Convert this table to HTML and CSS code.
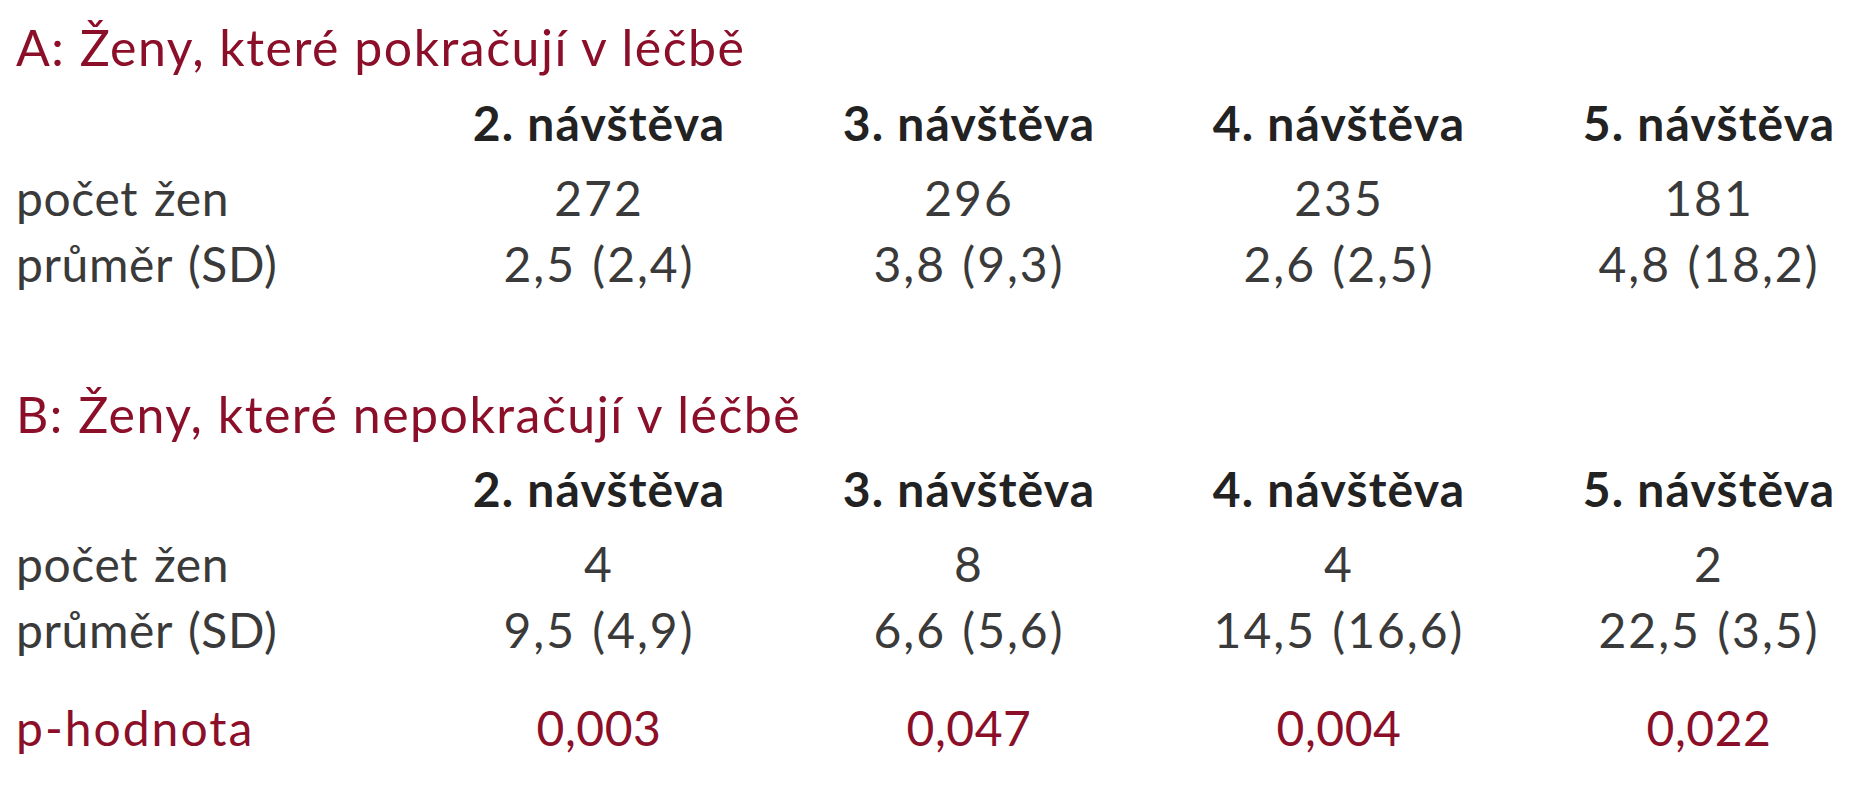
FILE: index.html
```html
<!DOCTYPE html>
<html lang="cs">
<head>
<meta charset="utf-8">
<title>Návštěvy</title>
<link rel="stylesheet" href="styles.css">
</head>
<body>
<main class="page">
  <section class="block">
    <h2 class="title">A: Ženy, které pokračují v léčbě</h2>
    <div class="grid">
      <div class="row head">
        <span class="label"></span>
        <span class="cell">2. návštěva</span>
        <span class="cell">3. návštěva</span>
        <span class="cell">4. návštěva</span>
        <span class="cell">5. návštěva</span>
      </div>
      <div class="row">
        <span class="label">počet žen</span>
        <span class="cell">272</span>
        <span class="cell">296</span>
        <span class="cell">235</span>
        <span class="cell">181</span>
      </div>
      <div class="row">
        <span class="label">průměr (SD)</span>
        <span class="cell">2,5 (2,4)</span>
        <span class="cell">3,8 (9,3)</span>
        <span class="cell">2,6 (2,5)</span>
        <span class="cell">4,8 (18,2)</span>
      </div>
    </div>
  </section>
  <section class="block block-b">
    <h2 class="title">B: Ženy, které nepokračují v léčbě</h2>
    <div class="grid">
      <div class="row head">
        <span class="label"></span>
        <span class="cell">2. návštěva</span>
        <span class="cell">3. návštěva</span>
        <span class="cell">4. návštěva</span>
        <span class="cell">5. návštěva</span>
      </div>
      <div class="row">
        <span class="label">počet žen</span>
        <span class="cell">4</span>
        <span class="cell">8</span>
        <span class="cell">4</span>
        <span class="cell">2</span>
      </div>
      <div class="row">
        <span class="label">průměr (SD)</span>
        <span class="cell">9,5 (4,9)</span>
        <span class="cell">6,6 (5,6)</span>
        <span class="cell">14,5 (16,6)</span>
        <span class="cell">22,5 (3,5)</span>
      </div>
      <div class="row pval">
        <span class="label">p-hodnota</span>
        <span class="cell">0,003</span>
        <span class="cell">0,047</span>
        <span class="cell">0,004</span>
        <span class="cell">0,022</span>
      </div>
    </div>
  </section>
</main>
</body>
</html>
```
FILE: styles.css
```css
html, body {
  margin: 0;
  padding: 0;
  background: #ffffff;
}

body {
  font-family: Lato, "Open Sans", "DejaVu Sans", sans-serif;
  font-size: 48px;
  line-height: 66px;
  color: #3a3a3a;
  overflow: hidden;
}

.page {
  padding: 14px 0 0 16px;
}

.title {
  margin: 0 0 10px 0;
  font-size: 50px;
  font-weight: 400;
  line-height: 66px;
  letter-spacing: 1.5px;
  color: #8c0f2a;
}

.block-b {
  margin-top: 84px;
}

.block-b .title {
  margin-bottom: 9px;
}

.grid {
  display: flex;
  flex-direction: column;
}

.row {
  display: grid;
  grid-template-columns: 363px repeat(4, 300px);
  column-gap: 70px;
  white-space: nowrap;
}

.row.head {
  margin-bottom: 9px;
  font-weight: 700;
  color: #222222;
}

.label {
  text-align: left;
  letter-spacing: 0.6px;
  word-spacing: 3px;
}

.cell {
  text-align: center;
  letter-spacing: 2px;
  word-spacing: 2px;
}

.row.head .cell {
  letter-spacing: 1.2px;
  word-spacing: 0;
}

.row.pval {
  margin-top: 32px;
  color: #8c0f2a;
}

.row.pval .label {
  letter-spacing: 2px;
}

.row.pval .cell {
  letter-spacing: 0.5px;
}
```
